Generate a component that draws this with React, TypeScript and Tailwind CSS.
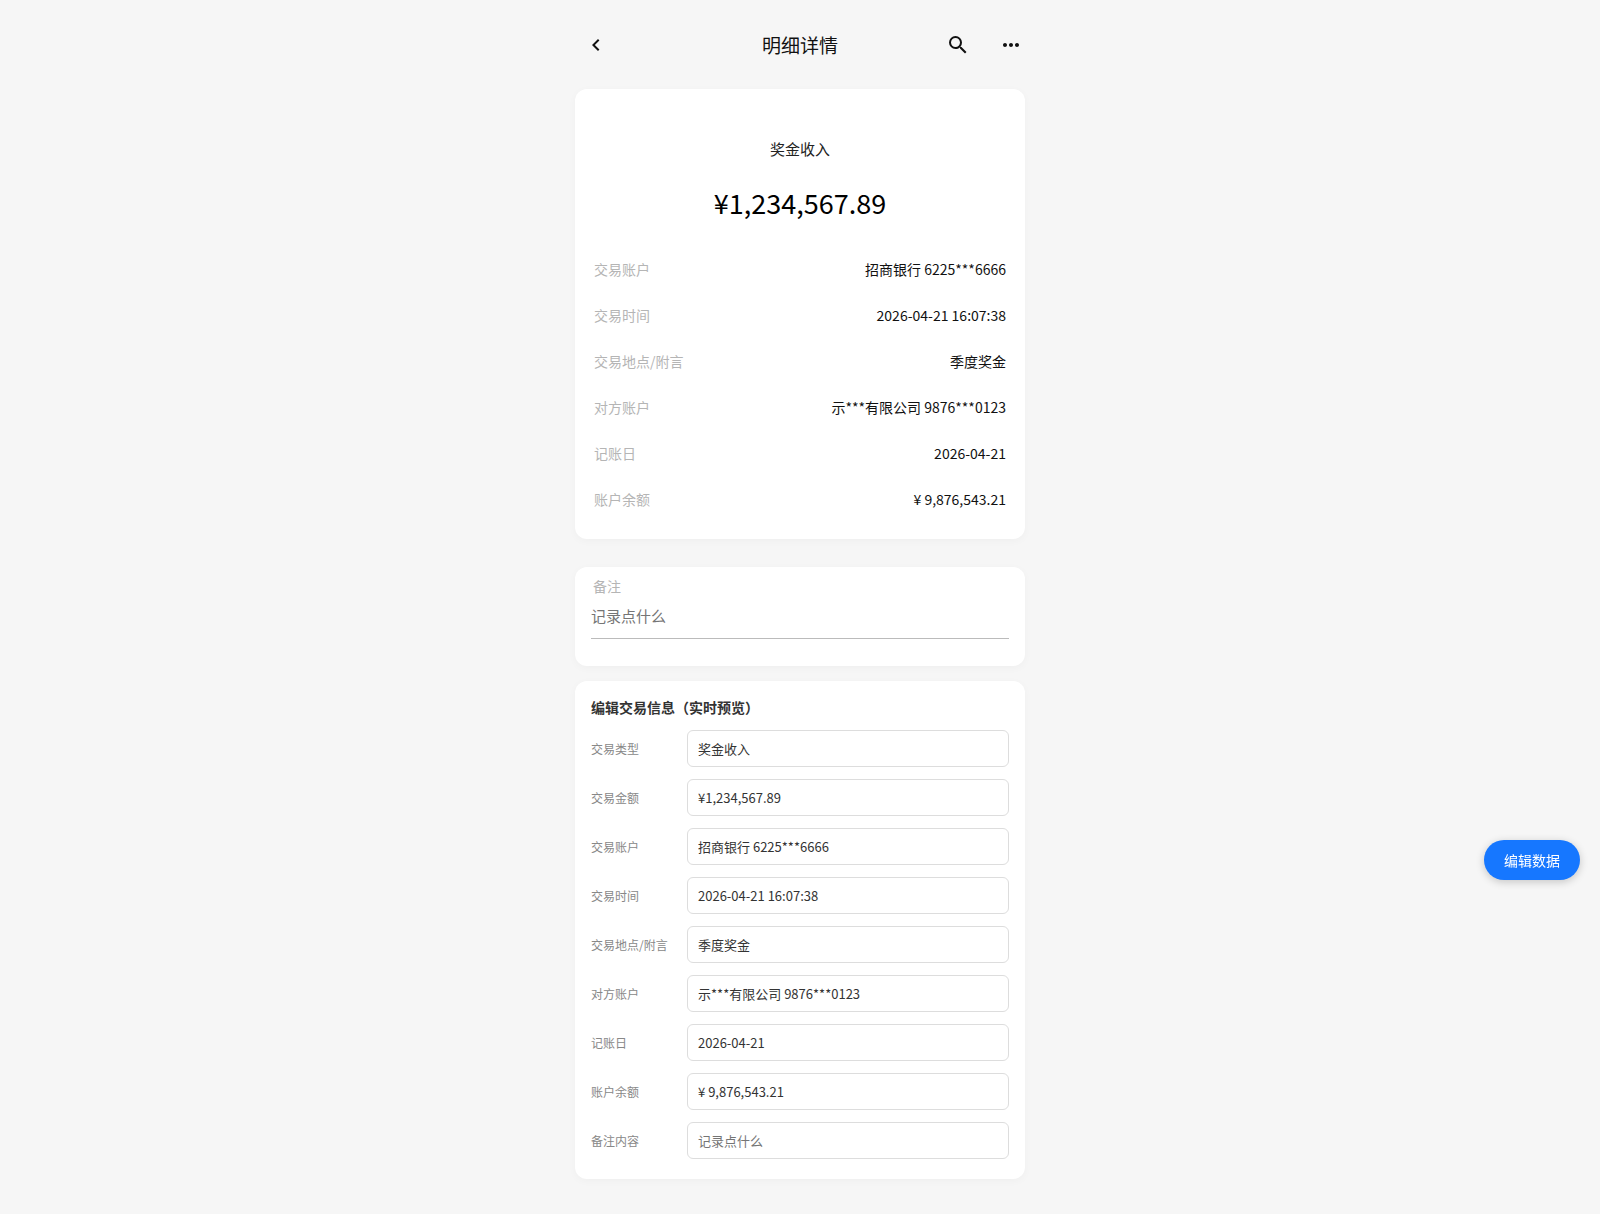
import { useState } from "react";
import { MdChevronLeft, MdMoreHoriz, MdSearch } from "react-icons/md";

const initialData = {
  type: "奖金收入",
  amount: "¥1,234,567.89",
  account: "招商银行 6225***6666",
  time: "2026-04-21 16:07:38",
  place: "季度奖金",
  counterparty: "示***有限公司 9876***0123",
  bookDate: "2026-04-21",
  balance: "¥ 9,876,543.21",
  remark: "",
};

type Data = typeof initialData;
type Field = { key: keyof Data; label: string; placeholder?: string };

const detailFields: Field[] = [
  { key: "account", label: "交易账户" },
  { key: "time", label: "交易时间" },
  { key: "place", label: "交易地点/附言" },
  { key: "counterparty", label: "对方账户" },
  { key: "bookDate", label: "记账日" },
  { key: "balance", label: "账户余额" },
];

const editFields: Field[] = [
  { key: "type", label: "交易类型" },
  { key: "amount", label: "交易金额" },
  ...detailFields,
  { key: "remark", label: "备注内容", placeholder: "记录点什么" },
];

function Header() {
  return (
    <header className="grid grid-cols-[1fr_auto_1fr] items-center h-[89px] px-0.5">
      <div className="flex pl-[7px]">
        <button type="button" aria-label="返回">
          <MdChevronLeft size={24} />
        </button>
      </div>
      <h1 className="text-[19px] leading-7">明细详情</h1>
      <div className="flex justify-end gap-[29px]">
        <button type="button" aria-label="搜索">
          <MdSearch size={24} />
        </button>
        <button type="button" aria-label="更多">
          <MdMoreHoriz size={24} />
        </button>
      </div>
    </header>
  );
}

function App() {
  const [data, setData] = useState<Data>(initialData);
  const [showEdit, setShowEdit] = useState(true);

  const update = (key: keyof Data, value: string) =>
    setData((prev) => ({ ...prev, [key]: value }));

  return (
    <div className="min-h-screen bg-[#f6f6f6] text-[#111] font-['Noto_Sans_CJK_SC',sans-serif]">
      <div className="max-w-[450px] mx-auto pb-8">
        <Header />

        {/* Transaction details */}
        <section className="bg-white rounded-xl shadow-[0_2px_8px_rgba(0,0,0,0.03)] px-[19px] pt-12 pb-[17px]">
          <p className="text-[15px] leading-6 text-center text-[#222]">
            {data.type}
          </p>
          <p className="mt-[22px] mb-[23px] text-[27px] leading-10 text-center text-black">
            {data.amount}
          </p>
          <dl>
            {detailFields.map((field) => (
              <div
                key={field.key}
                className="flex items-center justify-between py-[13px] text-sm"
              >
                <dt className="text-[#b5b5b5]">{field.label}</dt>
                <dd>{data[field.key]}</dd>
              </div>
            ))}
          </dl>
        </section>

        {/* Remark */}
        <section className="mt-7 bg-white rounded-xl shadow-[0_2px_8px_rgba(0,0,0,0.03)] px-4 pt-[9px] pb-[27px]">
          <label
            htmlFor="remark"
            className="block pl-0.5 text-sm text-[#b5b5b5]"
          >
            备注
          </label>
          <input
            id="remark"
            type="text"
            value={data.remark}
            placeholder="记录点什么"
            onChange={(e) => update("remark", e.target.value)}
            className="block w-full h-[43px] pb-[3px] border-b border-[#bbb] text-[15px] placeholder:text-[#757575] focus:outline-none"
          />
        </section>

        {/* Edit form */}
        {showEdit && (
          <section className="mt-[15px] bg-white rounded-xl shadow-[0_2px_8px_rgba(0,0,0,0.03)] px-4 pt-4 pb-5">
            <h2 className="mb-3 text-sm leading-[21px] font-bold text-[#333]">
              编辑交易信息（实时预览）
            </h2>
            <form className="space-y-3">
              {editFields.map((field) => (
                <div key={field.key} className="flex items-center gap-4">
                  <label
                    htmlFor={`edit-${field.key}`}
                    className="w-20 shrink-0 text-xs text-[#888]"
                  >
                    {field.label}
                  </label>
                  <input
                    id={`edit-${field.key}`}
                    type="text"
                    value={data[field.key]}
                    placeholder={field.placeholder}
                    onChange={(e) => update(field.key, e.target.value)}
                    className="flex-1 min-w-0 h-[37px] px-[10px] border border-[#ddd] rounded-md text-[13px] text-[#333] placeholder:text-[#757575] focus:outline-none"
                  />
                </div>
              ))}
            </form>
          </section>
        )}
      </div>

      {/* Floating toggle */}
      <button
        type="button"
        onClick={() => setShowEdit(!showEdit)}
        className="fixed right-5 bottom-[334px] h-10 px-5 rounded-full bg-[#1677ff] text-sm text-white shadow-[0_2px_8px_rgba(0,0,0,0.2)]"
      >
        编辑数据
      </button>
    </div>
  );
}

export default App;
